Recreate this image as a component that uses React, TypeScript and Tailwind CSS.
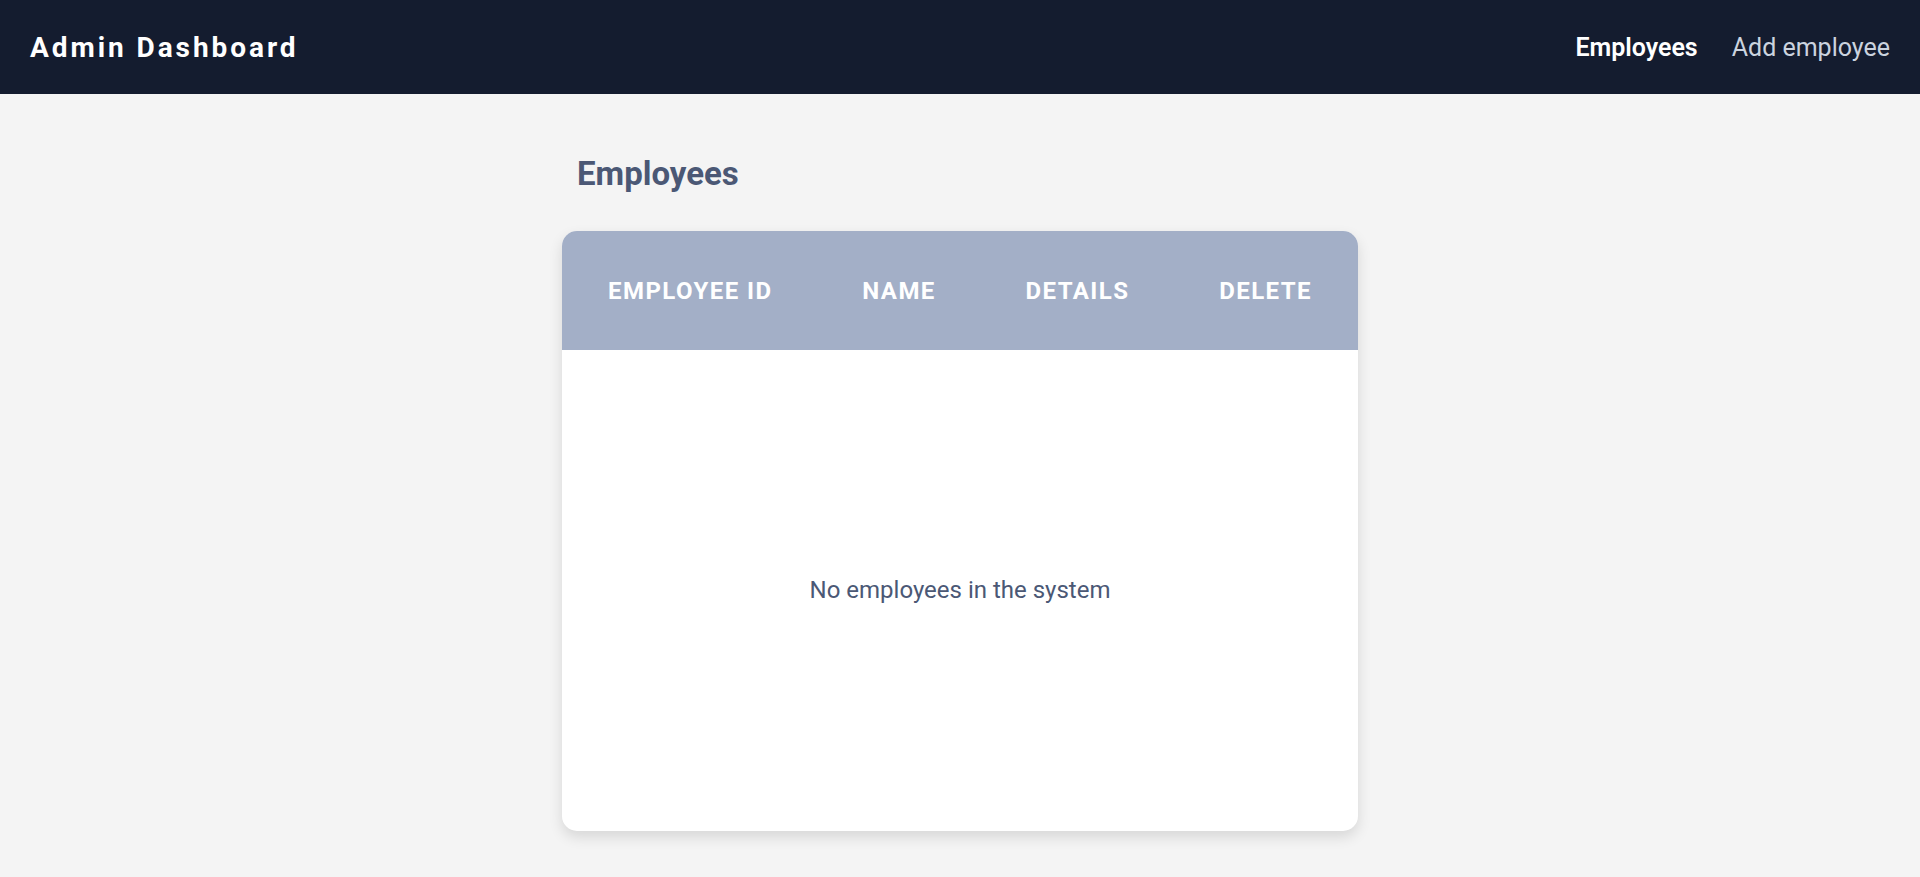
const columns = ["Employee ID", "Name", "Details", "Delete"];

const App = () => {
  return (
    <div className="min-h-screen bg-[#f4f4f4] font-['Roboto',sans-serif]">
      <header className="flex h-[94px] items-center justify-between bg-[#141c2f] px-[30px] pt-[2px]">
        <h1 className="text-[28px] font-bold tracking-[0.105em] text-white">Admin Dashboard</h1>
        <nav className="flex items-center gap-[34px] text-[25px]">
          <a href="#" className="font-semibold text-white">
            Employees
          </a>
          <a href="#" className="text-[#cbd3df]">
            Add employee
          </a>
        </nav>
      </header>

      <main className="mx-auto w-[796px] pt-[55px]">
        <h2 className="pl-[15px] text-[33px] font-bold text-[#4b5875]">Employees</h2>

        <div className="mt-[32px] flex h-[600px] flex-col overflow-hidden rounded-[15px] bg-white shadow-[0_6px_14px_rgba(0,0,0,0.12)]">
          <div className="flex h-[119px] items-center justify-between bg-[#a3afc7] px-[46px] pt-[1px]">
            {columns.map((col) => (
              <span key={col} className="text-[24px] font-bold uppercase tracking-[0.06em] text-white">
                {col}
              </span>
            ))}
          </div>
          <div className="flex flex-1 items-center justify-center">
            <p className="text-[24px] text-[#4b5875]">No employees in the system</p>
          </div>
        </div>
      </main>
    </div>
  );
};

export default App;
